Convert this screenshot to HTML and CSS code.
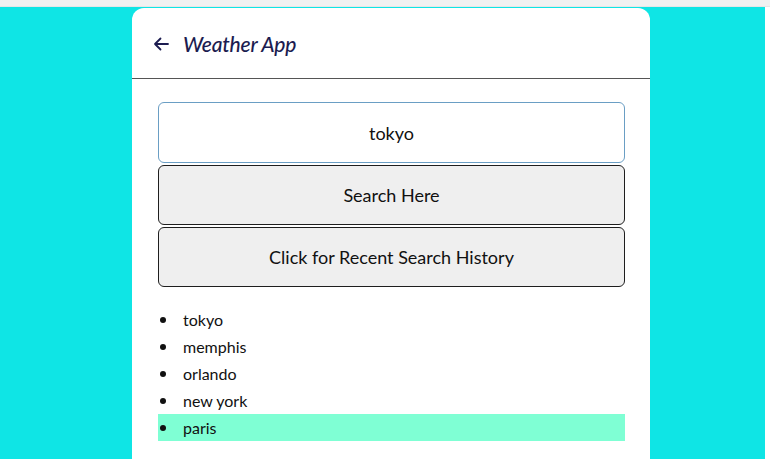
FILE: index.html
```html
<!DOCTYPE html>
<html lang="en">
<head>
<meta charset="utf-8">
<title>Weather App</title>
<link rel="stylesheet" href="styles.css">
</head>
<body>
<div class="topstrip"></div>
<div class="stage">
  <div class="card">
    <header class="card-header">
      <svg class="back" width="16" height="14" viewBox="0 0 16 14" aria-hidden="true">
        <path d="M15 7H2M7.5 1.5L2 7l5.5 5.5" fill="none" stroke="#1c1c50" stroke-width="1.8" stroke-linecap="round" stroke-linejoin="round"/>
      </svg>
      <h1 class="title">Weather App</h1>
    </header>
    <div class="card-body">
      <input class="search-input" type="text" value="tokyo">
      <button class="btn">Search Here</button>
      <button class="btn">Click for Recent Search History</button>
      <ul class="history">
        <li class="history-item">tokyo</li>
        <li class="history-item">memphis</li>
        <li class="history-item">orlando</li>
        <li class="history-item">new york</li>
        <li class="history-item active">paris</li>
      </ul>
    </div>
  </div>
</div>
</body>
</html>
```
FILE: styles.css
```css
html, body {
  margin: 0;
  padding: 0;
  height: 100%;
  background: #ffffff;
  overflow: hidden;
}
body {
  font-family: Lato, "Liberation Sans", sans-serif;
  color: #111;
  display: flex;
  flex-direction: column;
}
.topstrip {
  height: 7px;
  background: #f1f1f1;
  border-bottom: 1px solid #e6e6e6;
  box-sizing: border-box;
}
.stage {
  flex: 1;
  background: #0fe5e5;
  margin-right: 5px;
  padding-top: 1px;
  display: flex;
}
.card {
  margin-left: 132px;
  width: 518px;
  background: #ffffff;
  border-radius: 12px 12px 0 0;
}
.card-header {
  height: 71px;
  border-bottom: 1.5px solid #555;
  display: flex;
  align-items: center;
  padding-left: 21px;
  box-sizing: border-box;
}
.back {
  margin-top: 1px;
}
.title {
  margin: 0 0 0 14px;
  font-size: 21px;
  font-weight: 500;
  font-style: italic;
  color: #1c1c50;
  letter-spacing: -0.2px;
}
.card-body {
  padding: 23px 25px 0 26px;
  display: flex;
  flex-direction: column;
  gap: 2px;
}
.search-input {
  height: 61px;
  box-sizing: border-box;
  border: 1.5px solid #6a9ec4;
  border-radius: 6px;
  text-align: center;
  font-family: inherit;
  font-size: 18px;
  color: #111;
  background: #fff;
  outline: none;
  padding: 0;
}
.btn {
  height: 60px;
  box-sizing: border-box;
  border: 1.5px solid #1e1e1e;
  border-radius: 6px;
  background: #efefef;
  font-family: inherit;
  font-size: 18px;
  color: #111;
  padding: 0;
}
.history {
  list-style: none;
  margin: 17px 0 0 0;
  padding: 0;
}
.history-item {
  height: 27px;
  display: flex;
  align-items: center;
  font-size: 16px;
  color: #111;
}
.history-item::before {
  content: "";
  width: 6px;
  height: 6px;
  border-radius: 50%;
  background: #111;
  margin-left: 2px;
  margin-right: 17px;
}
.history-item.active {
  background: #7fffd4;
}
```
